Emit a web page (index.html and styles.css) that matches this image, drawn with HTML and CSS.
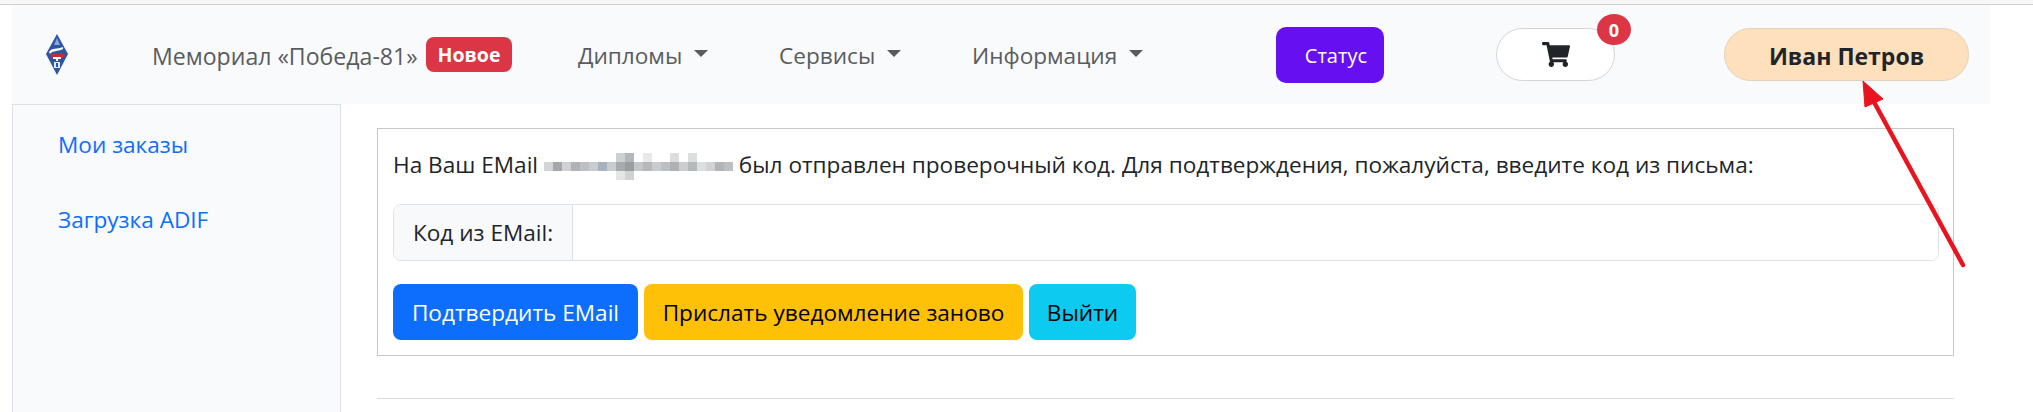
FILE: index.html
```html
<!DOCTYPE html>
<html lang="ru">
<head>
<meta charset="utf-8">
<title>Подтверждение EMail</title>
<link rel="stylesheet" href="styles.css">
</head>
<body>
<div class="top-rule"></div>
<div class="page">
  <nav class="navbar">
    <a class="logo" href="#">
      <svg width="24" height="41" viewBox="0 0 24 41">
        <path d="M12 0 23 20 12 41 1 20Z" fill="#2d55a5"/>
        <path d="M12 4 15 11 9 11Z" fill="#8ea6d6"/>
        <path d="M4 18C7 13 12 16 18 13L18 15C12 18 8 16 5 20Z" fill="#fff"/>
        <path d="M6 20H20L19 23H7Z" fill="#d8252e"/>
        <path d="M8 23H16V25H13V27H11V25H8Z" fill="#fff"/>
        <path d="M9 28H15V34H9Z" fill="#dfe6f3"/>
        <path d="M11 29H13V33H11Z" fill="#2d55a5"/>
      </svg>
    </a>
    <a class="brand" href="#">Мемориал «Победа-81»</a>
    <span class="badge-new">Новое</span>
    <a class="nav-item nav-diplomas" href="#">Дипломы<i class="caret"></i></a>
    <a class="nav-item nav-services" href="#">Сервисы<i class="caret"></i></a>
    <a class="nav-item nav-info" href="#">Информация<i class="caret"></i></a>
    <a class="btn-status" href="#">Статус</a>
    <a class="btn-cart" href="#">
      <svg class="cart-icon" viewBox="0 0 576 512"><path d="M528.12 301.319l47.273-208C578.806 78.301 567.391 64 551.99 64H159.208l-9.166-44.81C147.758 8.021 137.93 0 126.529 0H24C10.745 0 0 10.745 0 24v16c0 13.255 10.745 24 24 24h69.883l70.248 343.435C147.325 417.1 136 435.222 136 456c0 30.928 25.072 56 56 56s56-25.072 56-56c0-15.674-6.447-29.835-16.824-40h209.647C430.447 426.165 424 440.326 424 456c0 30.928 25.072 56 56 56s56-25.072 56-56c0-22.172-12.888-41.332-31.579-50.405l5.517-24.276c3.413-15.018-8.002-29.319-23.403-29.319H218.117l-6.545-32h293.145c11.206 0 20.92-7.754 23.403-18.681z"/></svg>
      <span class="cart-count">0</span>
    </a>
    <a class="btn-user" href="#">Иван Петров</a>
  </nav>
  <div class="main">
    <aside class="sidebar">
      <a class="side-link" href="#">Мои заказы</a>
      <a class="side-link" href="#">Загрузка ADIF</a>
    </aside>
    <section class="content">
      <div class="verify-box">
        <p class="verify-text">На Ваш EMail <svg class="blur" width="189" height="27" viewBox="0 0 21 3" shape-rendering="crispEdges">
          <rect x="8" y="0" width="1" height="1" fill="#cdd0d2"/><rect x="9" y="0" width="1" height="1" fill="#b3b7ba"/><rect x="14" y="0" width="1" height="1" fill="#dbdddf"/><rect x="16" y="0" width="1" height="1" fill="#dcdfe0"/><rect x="11" y="0" width="1" height="1" fill="#e8e9ea"/>
          <rect x="0" y="1" width="1" height="1" fill="#d2d4d7"/><rect x="1" y="1" width="1" height="1" fill="#a4a8ab"/><rect x="2" y="1" width="1" height="1" fill="#cfd1d3"/><rect x="3" y="1" width="1" height="1" fill="#afb3b6"/><rect x="4" y="1" width="1" height="1" fill="#bcc0c3"/><rect x="5" y="1" width="1" height="1" fill="#c9ccce"/><rect x="6" y="1" width="1" height="1" fill="#a6b2bd"/><rect x="7" y="1" width="1" height="1" fill="#c9ccce"/><rect x="8" y="1" width="1" height="1" fill="#a6aaad"/><rect x="9" y="1" width="1" height="1" fill="#9a9ea1"/><rect x="10" y="1" width="1" height="1" fill="#c4c7c9"/><rect x="11" y="1" width="1" height="1" fill="#b6b9bc"/><rect x="12" y="1" width="1" height="1" fill="#c9ccce"/><rect x="13" y="1" width="1" height="1" fill="#bcc0c3"/><rect x="14" y="1" width="1" height="1" fill="#aeb2b5"/><rect x="15" y="1" width="1" height="1" fill="#cbced0"/><rect x="16" y="1" width="1" height="1" fill="#b6b9bc"/><rect x="17" y="1" width="1" height="1" fill="#dcdfe0"/><rect x="18" y="1" width="1" height="1" fill="#d0d2d4"/><rect x="19" y="1" width="1" height="1" fill="#b0b4b7"/><rect x="20" y="1" width="1" height="1" fill="#bcc0c3"/>
          <rect x="9" y="2" width="1" height="1" fill="#d0d2d4"/><rect x="8" y="2" width="1" height="1" fill="#e4e5e6"/>
        </svg> был отправлен проверочный код. Для подтверждения, пожалуйста, введите код из письма:</p>
        <div class="input-group">
          <label class="input-label" for="code">Код из EMail:</label>
          <input class="input-field" id="code" type="text">
        </div>
        <div class="actions">
          <button class="btn btn-blue">Подтвердить EMail</button>
          <button class="btn btn-yellow">Прислать уведомление заново</button>
          <button class="btn btn-cyan">Выйти</button>
        </div>
      </div>
      <hr class="divider">
    </section>
  </div>
</div>
<svg class="arrow" width="130" height="200" viewBox="0 0 130 200">
  <path d="M113 187 24 24" fill="none" stroke="#e8141f" stroke-width="4.5" stroke-linecap="round"/>
  <path d="M13 3 33 21 15 29Z" fill="#e8141f" stroke="#e8141f" stroke-width="1"/>
</svg>
</body>
</html>
```
FILE: styles.css
```css
* {
  box-sizing: border-box;
}

html,
body {
  height: 100%;
}

body {
  margin: 0;
  background: #fff;
  color: #212529;
  font-family: "Open Sans", "Noto Sans", sans-serif;
  font-size: 22.6px;
  overflow: hidden;
  position: relative;
}

a {
  text-decoration: none;
}

.top-rule {
  height: 5px;
  border-bottom: 1px solid #d0d0d0;
  background: #f7f7f7;
}

.page {
  padding: 0 43px 0 12px;
}

.navbar {
  display: flex;
  align-items: center;
  height: 99px;
  background: #f9fafb;
}

.logo {
  display: flex;
  margin-left: 33px;
  width: 24px;
}

.brand {
  margin-left: 83px;
  width: 264px;
  padding-top: 2px;
  white-space: nowrap;
  color: #595c5f;
  font-size: 23.1px;
}

.badge-new {
  margin-left: 10px;
  width: 86px;
  height: 35px;
  display: flex;
  align-items: center;
  justify-content: center;
  border-radius: 8px;
  background: #dc3545;
  color: #fff;
  font-weight: 700;
  font-size: 19.5px;
}

.nav-item {
  display: flex;
  align-items: center;
  padding-top: 2px;
  white-space: nowrap;
  color: #595c5f;
}

.nav-diplomas {
  margin-left: 66px;
  width: 201px;
}

.nav-services {
  width: 193px;
}

.nav-info {
  width: 304px;
}

.caret {
  display: block;
  margin-left: 12px;
  margin-top: -4px;
  width: 0;
  height: 0;
  border-left: 7.5px solid transparent;
  border-right: 7.5px solid transparent;
  border-top: 7.5px solid #595c5f;
}

.btn-status {
  display: flex;
  align-items: center;
  justify-content: flex-end;
  width: 108px;
  height: 56px;
  padding: 2px 17px 0 0;
  border-radius: 10px;
  background: #6610f2;
  color: #fff;
  font-size: 20px;
}

.btn-cart {
  position: relative;
  display: flex;
  align-items: center;
  justify-content: center;
  margin-left: 112px;
  width: 119px;
  height: 53px;
  border: 1px solid #d5d5d5;
  border-radius: 27px;
  background: #fff;
}

.cart-icon {
  width: 28px;
  height: 25px;
  fill: #212529;
}

.cart-count {
  position: absolute;
  top: -15px;
  right: -17px;
  width: 34px;
  height: 31px;
  display: flex;
  align-items: center;
  justify-content: center;
  border-radius: 50%;
  background: #dc3545;
  color: #fff;
  font-size: 18px;
  font-weight: 700;
}

.btn-user {
  display: flex;
  align-items: center;
  justify-content: center;
  margin-left: 109px;
  width: 245px;
  height: 53px;
  padding-top: 2px;
  border: 1px solid #e0d2bd;
  border-radius: 27px;
  background: #ffe0bd;
  color: #212529;
  font-weight: 700;
  font-size: 23px;
}

.main {
  display: flex;
  min-height: 308px;
}

.sidebar {
  display: flex;
  flex: none;
  flex-direction: column;
  width: 329px;
  padding: 27px 0 0 45px;
  gap: 49px;
  background: #f9fafb;
  border: 1px solid #dee2e6;
  border-bottom: 0;
}

.side-link {
  color: #0d6efd;
  line-height: 26px;
}

.content {
  flex: 1;
  min-width: 0;
  padding: 24px 36px 0 36px;
}

.verify-box {
  height: 228px;
  padding: 16px 14px 0 15px;
  border: 1px solid #c8c8c8;
}

.verify-text {
  margin: 0;
  height: 59px;
  line-height: 40px;
  white-space: nowrap;
  color: #212529;
}

.blur {
  vertical-align: middle;
}

.input-group {
  display: flex;
  height: 57px;
  border: 1px solid #dee2e6;
  border-radius: 8px;
  overflow: hidden;
}

.input-label {
  display: flex;
  align-items: center;
  width: 179px;
  padding-left: 19px;
  background: #f8f9fa;
  border-right: 1px solid #dee2e6;
  white-space: nowrap;
}

.input-field {
  flex: 1;
  min-width: 0;
  border: 0;
  outline: 0;
  background: #fff;
}

.actions {
  display: flex;
  gap: 6px;
  margin-top: 23px;
}

.btn {
  height: 56px;
  border: 0;
  border-radius: 8px;
  font-family: inherit;
  font-size: 22.6px;
  white-space: nowrap;
  padding: 0;
}

.btn-blue {
  width: 245px;
  background: #0d6efd;
  color: #fff;
}

.btn-yellow {
  width: 379px;
  background: #ffc107;
  color: #000;
}

.btn-cyan {
  width: 107px;
  background: #0dcaf0;
  color: #000;
}

.divider {
  margin: 42px 0 0;
  border: 0;
  border-top: 1px solid #dcdcdc;
}

.arrow {
  position: absolute;
  left: 1850px;
  top: 78px;
}
```
